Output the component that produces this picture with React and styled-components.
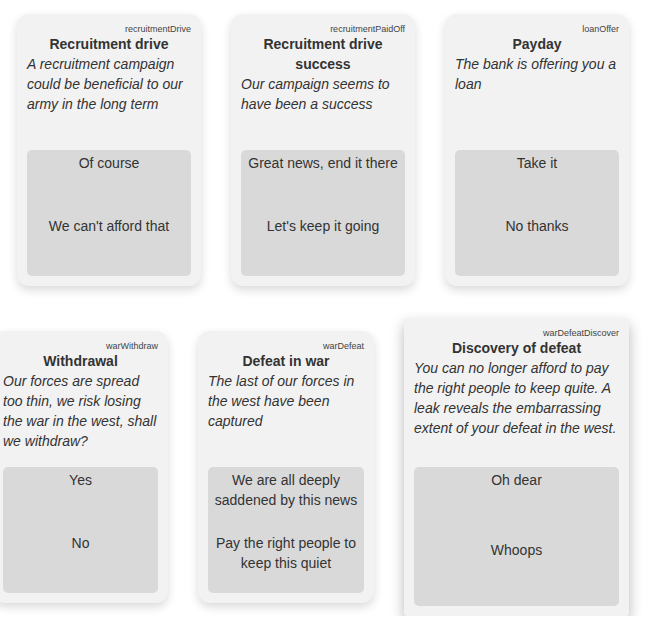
import React from 'react';
import styled, { createGlobalStyle } from 'styled-components';

const events = [
  [
    {
      id: 'recruitmentDrive',
      title: 'Recruitment drive',
      text: 'A recruitment campaign could be beneficial to our army in the long term',
      choices: ['Of course', "We can't afford that"],
      width: 184,
    },
    {
      id: 'recruitmentPaidOff',
      title: 'Recruitment drive success',
      text: 'Our campaign seems to have been a success',
      choices: ['Great news, end it there', "Let's keep it going"],
      width: 184,
    },
    {
      id: 'loanOffer',
      title: 'Payday',
      text: 'The bank is offering you a loan',
      choices: ['Take it', 'No thanks'],
      width: 184,
    },
  ],
  [
    {
      id: 'warWithdraw',
      title: 'Withdrawal',
      text: 'Our forces are spread too thin, we risk losing the war in the west, shall we withdraw?',
      choices: ['Yes', 'No'],
      width: 175,
    },
    {
      id: 'warDefeat',
      title: 'Defeat in war',
      text: 'The last of our forces in the west have been captured',
      choices: ['We are all deeply saddened by this news', 'Pay the right people to keep this quiet'],
      width: 176,
    },
    {
      id: 'warDefeatDiscover',
      title: 'Discovery of defeat',
      text: 'You can no longer afford to pay the right people to keep quite. A leak reveals the embarrassing extent of your defeat in the west.',
      choices: ['Oh dear', 'Whoops'],
      width: 225,
      active: true,
    },
  ],
];

export default function App() {
  return (
    <>
      <GlobalStyle />
      <Board>
        {events.map((row, i) => (
          <Row key={i} $offset={i === 0 ? 17 : -7}>
            {row.map((ev) => (
              <EventCard key={ev.id} {...ev} />
            ))}
          </Row>
        ))}
      </Board>
    </>
  );
}

function EventCard({ id, title, text, choices, width, active }) {
  return (
    <Card $width={width} $active={active}>
      <Story>
        <EventId>{id}</EventId>
        <Title>{title}</Title>
        <Description>{text}</Description>
      </Story>
      <Choices>
        {choices.map((c) => (
          <Choice key={c}>{c}</Choice>
        ))}
      </Choices>
    </Card>
  );
}

const GlobalStyle = createGlobalStyle`
  html, body {
    margin: 0;
    background: #fff;
    overflow: hidden;
  }
  body {
    font-family: "Liberation Sans", Arial, sans-serif;
    color: #333;
  }
`;

const Board = styled.div`
  display: flex;
  flex-direction: column;
  gap: 32px;
  padding-top: 14px;
  width: 651px;
`;

const Row = styled.div`
  display: flex;
  align-items: center;
  gap: 30px;
  margin-left: ${(p) => p.$offset}px;
`;

const Card = styled.div`
  box-sizing: border-box;
  flex: none;
  width: ${(p) => p.$width}px;
  height: ${(p) => (p.$active ? 298 : 272)}px;
  padding: 10px;
  display: flex;
  flex-direction: column;
  background: #f2f2f2;
  border-radius: ${(p) => (p.$active ? '3px' : '12px')};
  box-shadow: ${(p) =>
    p.$active
      ? '0 6px 14px rgba(0, 0, 0, 0.28)'
      : '0 4px 10px rgba(0, 0, 0, 0.15)'};
`;

const Story = styled.div`
  flex: 1;
  display: flex;
  flex-direction: column;
`;

const EventId = styled.div`
  font-size: 9px;
  line-height: 10px;
  text-align: right;
  color: #444;
`;

const Title = styled.div`
  font-size: 14px;
  line-height: 20px;
  font-weight: bold;
  text-align: center;
  color: #333;
`;

const Description = styled.div`
  font-size: 14px;
  line-height: 20px;
  font-style: italic;
  color: #333;
`;

const Choices = styled.div`
  flex: 1;
  display: flex;
  flex-direction: column;
  background: #d9d9d9;
  border-radius: 5px;
`;

const Choice = styled.div`
  flex: 1;
  padding: 3px 4px 0;
  font-size: 14px;
  line-height: 20px;
  text-align: center;
  color: #333;
  cursor: pointer;
`;
